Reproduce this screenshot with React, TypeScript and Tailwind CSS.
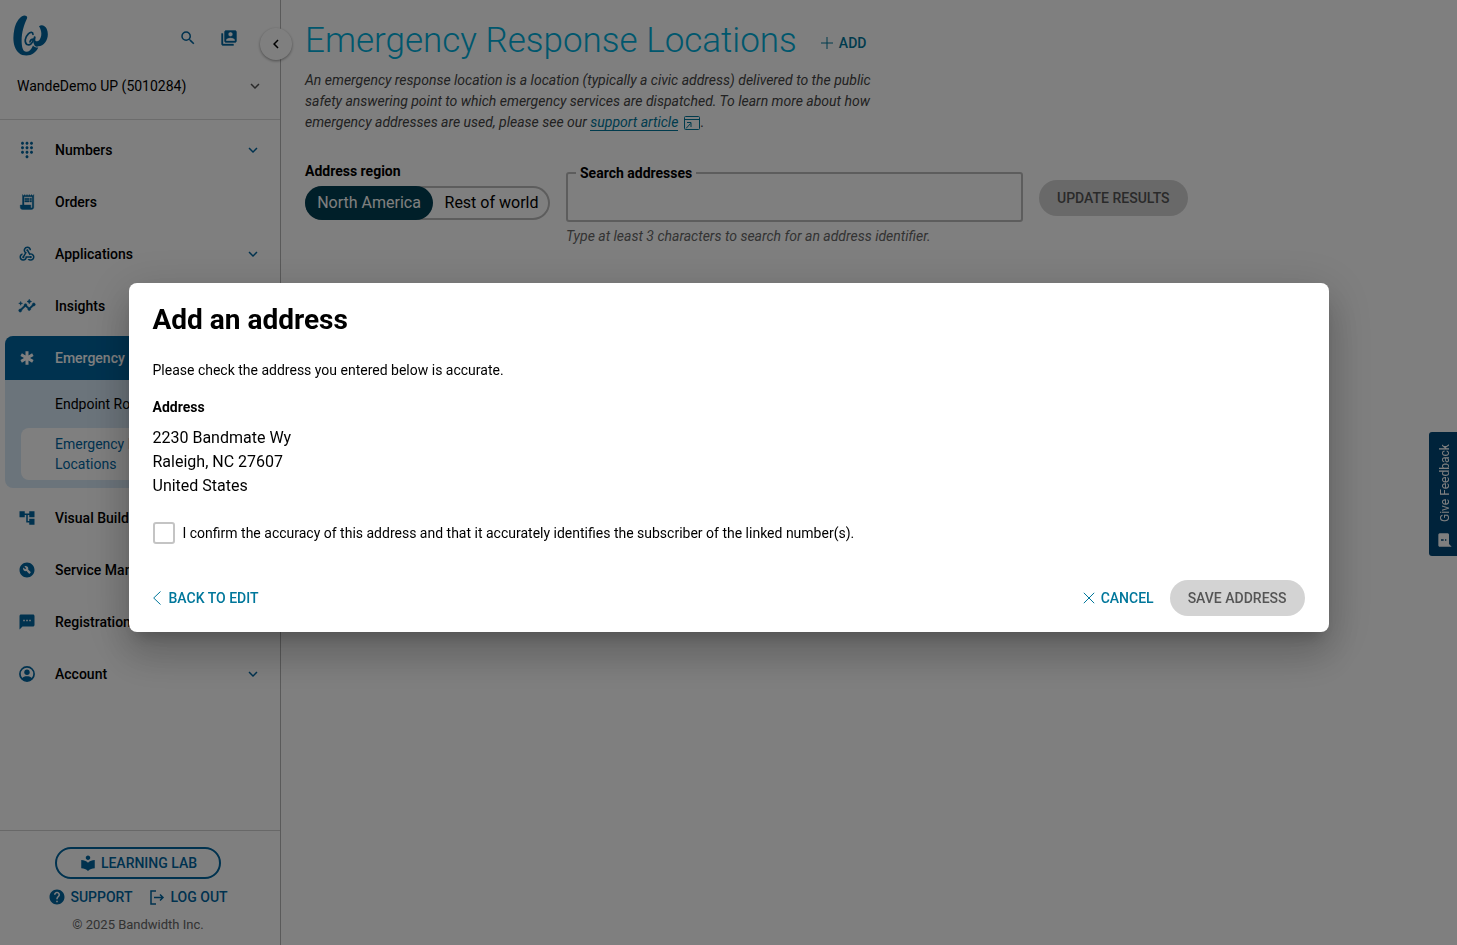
import React from 'react';
import type { ReactNode } from 'react';
import {
  MdAccountTree,
  MdBuildCircle,
  MdChevronLeft,
  MdDialpad,
  MdEmergency,
  MdExpandMore,
  MdFeedback,
  MdHelp,
  MdInsights,
  MdLocalLibrary,
  MdReceiptLong,
  MdSearch,
  MdSwitchAccount,
  MdTextsms,
  MdWebhook,
} from 'react-icons/md';

function Logo() {
  return (
    <svg viewBox="0 0 105 122" className="h-[41px] w-[35px]" fill="#00659f" aria-hidden="true">
      <path d="M27 3 C16 10 8 24 4 42 C0 62 0 80 5 94 C11 111 22 121 40 121 C57 121 69 111 76 97 C70 98 64 96 60 91 C55 103 48 110 40 110 C30 109 27 98 26 82 C25 56 32 30 42 10 C45 2 35 -2 27 3 Z" />
      <path d="M78 33 C86 28 96 31 101 41 C107 54 105 70 97 81 C89 92 77 96 68 91 C64 87 64 81 66 76 C73 82 80 77 83 67 C87 56 85 44 78 33 Z" />
      <path
        d="M60 58 C60 50 52 50 46 56 C36 66 33 81 42 88 C51 92 59 84 62 72 C56 72 52 75 51 80"
        fill="none"
        stroke="#00659f"
        strokeWidth="5"
        strokeLinecap="round"
      />
      <path d="M65 66 C62 78 64 90 72 92" fill="none" stroke="#00659f" strokeWidth="6" strokeLinecap="round" />
    </svg>
  );
}

function AccountIcon() {
  return (
    <svg viewBox="0 0 18 18" className="size-[18px]" aria-hidden="true">
      <circle cx="9" cy="9" r="7.1" fill="none" stroke="currentColor" strokeWidth="1.7" />
      <circle cx="9" cy="7.2" r="2.7" fill="currentColor" />
      <path d="M3.6 13.4C5 11.9 7 11.3 9 11.3S13 11.9 14.4 13.4C13 15.2 11.2 16 9 16S5 15.2 3.6 13.4Z" fill="currentColor" />
    </svg>
  );
}

function NavItem({ icon, label, expandable = false }: { icon: ReactNode; label: string; expandable?: boolean }) {
  return (
    <a href="#" className="flex h-11 items-center px-[13px] text-sm font-medium text-black">
      <span className="flex w-[37px] shrink-0 text-[18px] text-[#00659f]">{icon}</span>
      <span className="grow">{label}</span>
      {expandable && <MdExpandMore className="text-[18px] text-[#00659f]" />}
    </a>
  );
}

function Sidebar() {
  return (
    <aside className="relative flex w-[281px] shrink-0 flex-col border-r border-[#b4b4b4] bg-white">
      <button
        type="button"
        aria-label="Collapse menu"
        className="absolute top-7 -right-3 flex size-8 items-center justify-center rounded-full bg-white text-lg text-black shadow-[0_1px_3px_rgba(0,0,0,0.4)]"
      >
        <MdChevronLeft />
      </button>
      <header className="flex h-[120px] flex-col border-b border-[#d8d8d8]">
        <div className="flex h-[72px] items-center pr-[42px] pb-px pl-[13px]">
          <Logo />
          <div className="ml-auto flex items-center gap-[23px] pt-1 text-[18px] text-[#00659f]">
            <button type="button" aria-label="Search">
              <MdSearch />
            </button>
            <button type="button" aria-label="Switch account">
              <MdSwitchAccount className="stroke-current stroke-[0.5] [&>[fill=none]]:stroke-none" />
            </button>
          </div>
        </div>
        <button type="button" className="flex items-center justify-between pt-1 pr-4 pl-[17px] text-sm text-black">
          WandeDemo UP (5010284)
          <MdExpandMore className="text-[18px] text-[#555]" />
        </button>
      </header>

      <nav className="flex grow flex-col gap-2 px-[5px] pt-2">
        <NavItem icon={<MdDialpad />} label="Numbers" expandable />
        <NavItem
          icon={<MdReceiptLong className="stroke-current stroke-[0.5] [&>[fill=none]]:stroke-none" />}
          label="Orders"
        />
        <NavItem icon={<MdWebhook />} label="Applications" expandable />
        <NavItem
          icon={<MdInsights className="stroke-current stroke-[0.8] [&_[fill=none]]:stroke-none" />}
          label="Insights"
        />
        <div className="overflow-hidden rounded-lg bg-[#d7e8f6] pb-2">
          <a href="#" className="flex h-11 items-center bg-[#00659f] px-[13px] text-sm font-medium text-white">
            <MdEmergency className="mr-[19px] text-[18px]" />
            Emergency
          </a>
          <a href="#" className="flex h-12 items-center pl-[50px] text-sm text-black">
            Endpoint Routing
          </a>
          <a
            href="#"
            className="mr-2 ml-4 flex h-13 items-center rounded-lg bg-white pl-[34px] text-sm leading-5 text-[#00659f]"
          >
            Emergency Response
            <br />
            Locations
          </a>
        </div>
        <NavItem icon={<MdAccountTree />} label="Visual Builder" />
        <NavItem icon={<MdBuildCircle />} label="Service Management" />
        <NavItem icon={<MdTextsms />} label="Registration Center" />
        <NavItem icon={<AccountIcon />} label="Account" expandable />
      </nav>

      <footer className="flex flex-col items-center border-t border-[#d0d0d0] pt-4 pr-1 pb-2.5 text-sm font-medium text-[#00659f]">
        <a href="#" className="flex h-8 items-center gap-1 rounded-full border-2 border-[#00659f] px-[22px]">
          <MdLocalLibrary className="text-[18px]" />
          LEARNING LAB
        </a>
        <div className="flex h-9 items-center gap-4">
          <a href="#" className="flex items-center gap-1">
            <MdHelp className="text-[18px]" />
            SUPPORT
          </a>
          <a href="#" className="flex items-center gap-1">
            <svg viewBox="0 0 18 18" className="size-[18px]" fill="none" stroke="currentColor" strokeWidth="1.5" aria-hidden="true">
              <path d="M8 3H3V16H8M6 9.5H15M12 6.5L15 9.5L12 12.5" />
            </svg>
            LOG OUT
          </a>
        </div>
        <p className="text-[13px] leading-5 font-normal text-[#666]">© 2025 Bandwidth Inc.</p>
      </footer>
    </aside>
  );
}

function Content() {
  return (
    <main className="min-w-0 grow px-6 pt-[17px]">
      <div className="flex items-center gap-6">
        <h1 className="text-[35px] leading-12 font-light text-[#00aedb]">Emergency Response Locations</h1>
        <button type="button" className="flex items-center gap-1.5 pt-1 text-sm font-medium text-[#00779b]">
          <svg viewBox="0 0 12 12" className="size-3" fill="none" stroke="currentColor" aria-hidden="true">
            <path d="M6 0V12M0 6H12" />
          </svg>
          ADD
        </button>
      </div>
      <p className="mt-[5px] max-w-[600px] text-sm leading-[21px] text-[#444] italic">
        An emergency response location is a location (typically a civic address) delivered to the public safety
        answering point to which emergency services are dispatched. To learn more about how emergency addresses are
        used, please see our{' '}
        <a href="#" className="border-b border-[#00779b] text-[#00779b]">
          support article
        </a>{' '}
        <svg
          viewBox="0 0 17 14"
          className="ml-0.5 inline h-3.5 w-[17px] align-[-3px]"
          fill="none"
          stroke="#00779b"
          aria-hidden="true"
        >
          <rect x="0.5" y="0.5" width="15" height="13" rx="1" />
          <path d="M0.5 3.5H15.5M2 12.5L6.5 7.5M3 6.5H7V11" />
        </svg>
        .
      </p>

      <div className="mt-[29px] flex flex-wrap items-start gap-4">
        <div>
          <p id="region-label" className="text-sm leading-[18px] font-bold text-black">
            Address region
          </p>
          <div
            role="group"
            aria-labelledby="region-label"
            className="mt-1.5 flex h-[34px] w-[245px] rounded-full bg-white text-base text-black shadow-[inset_0_0_0_2px_#bbb]"
          >
            <button type="button" className="w-32 rounded-full bg-[#003e52] text-white">
              North America
            </button>
            <button type="button" className="grow">
              Rest of world
            </button>
          </div>
        </div>
        <div className="w-[457px]">
          <fieldset className="mt-0.5 h-[58px] rounded-[3px] border-2 border-[#bbb] px-2">
            <legend className="px-1 text-sm leading-[18px] font-bold text-black">
              <label htmlFor="search">Search addresses</label>
            </legend>
            <input id="search" type="text" className="h-9 w-full bg-transparent text-base outline-none" />
          </fieldset>
          <p className="mt-1 text-sm leading-5 text-[#666] italic">
            Type at least 3 characters to search for an address identifier.
          </p>
        </div>
        <button
          type="button"
          className="mt-[18px] h-9 rounded-full bg-[#d3d3d3] px-[18px] text-sm font-medium text-[#555]"
        >
          UPDATE RESULTS
        </button>
      </div>
    </main>
  );
}

function AddressDialog() {
  return (
    <div className="fixed inset-0 flex items-center justify-center bg-black/50 pb-[30px]">
      <section
        role="dialog"
        aria-modal="true"
        aria-labelledby="dialog-title"
        className="w-full max-w-[1200px] rounded-lg bg-white px-6 pt-[17px] pb-4 text-sm text-black shadow-[0_11px_15px_-7px_rgba(0,0,0,0.2),0_24px_38px_3px_rgba(0,0,0,0.14),0_9px_46px_8px_rgba(0,0,0,0.12)]"
      >
        <h2 id="dialog-title" className="text-[28px] leading-10 font-bold">
          Add an address
        </h2>
        <p className="mt-5 leading-[21px]">Please check the address you entered below is accurate.</p>
        <h3 className="mt-4 leading-[21px] font-bold">Address</h3>
        <address className="mt-2 text-base leading-6 not-italic">
          2230 Bandmate Wy
          <br />
          Raleigh, NC 27607
          <br />
          United States
        </address>
        <div className="mt-6 flex items-center gap-2">
          <input
            id="confirm"
            type="checkbox"
            className="size-[22px] shrink-0 appearance-none rounded-[3px] border-2 border-[#c4c4c4] bg-white"
          />
          <label htmlFor="confirm">
            I confirm the accuracy of this address and that it accurately identifies the subscriber of the linked
            number(s).
          </label>
        </div>
        <div className="mt-9 flex h-9 items-center font-medium text-[#00779b]">
          <button type="button" className="flex items-center gap-2">
            <svg viewBox="0 0 8 14" className="h-3.5 w-2" fill="none" stroke="currentColor" aria-hidden="true">
              <path d="M7.5 0.5L0.7 7L7.5 13.5" />
            </svg>
            BACK TO EDIT
          </button>
          <button type="button" className="mr-4 ml-auto flex items-center gap-1.5">
            <svg viewBox="0 0 12 12" className="size-3" fill="none" stroke="currentColor" aria-hidden="true">
              <path d="M0.8 0.8L11.2 11.2M11.2 0.8L0.8 11.2" />
            </svg>
            CANCEL
          </button>
          <button type="button" className="h-9 rounded-full bg-[#d3d3d3] px-[18px] text-[#555]">
            SAVE ADDRESS
          </button>
        </div>
      </section>
    </div>
  );
}

export default function App() {
  return (
    <div className="flex min-h-screen bg-white font-['Roboto',sans-serif]">
      <Sidebar />
      <Content />
      <button
        type="button"
        className="fixed top-[432px] right-0 flex h-[124px] w-7 rotate-180 items-center gap-2.5 rounded-r-[3px] bg-[#004676] pt-2 pr-1 text-xs text-white [writing-mode:vertical-rl]"
      >
        <MdFeedback className="rotate-90 text-base" />
        Give Feedback
      </button>
      <AddressDialog />
    </div>
  );
}
